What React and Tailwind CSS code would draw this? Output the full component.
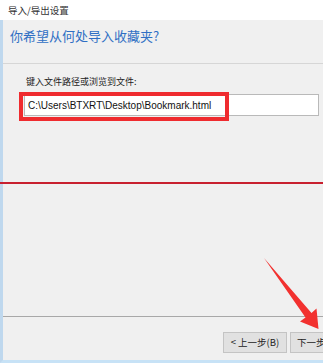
export default function App() {
    const font = { fontFamily: '"Microsoft YaHei", "Noto Sans CJK SC", "Liberation Sans", sans-serif' };
    return (
        <div className="relative w-[323px] h-[363px] overflow-hidden bg-[#f0f0f0] flex flex-col" style={font}>
            {/* Title bar */}
            <div className="h-[20px] shrink-0 bg-white flex items-center pl-[8px] text-[9.5px] text-[#333]">
                导入/导出设置
            </div>

            {/* Wizard body */}
            <div className="flex-1 flex flex-col border-l-[3px] border-b-[3px] border-l-[#bfd8ee] border-b-[#c7e2f6]">
                <div className="h-[44px] shrink-0 border-b border-[#d6d6d6] pl-[7px] pt-[6px] text-[13px] text-[#2f6fc4] leading-[20px]">
                    你希望从何处导入收藏夹?
                </div>

                <div className="pl-[23px] pt-[12px] text-[9px] leading-[12px] text-[#222]">键入文件路径或浏览到文件:</div>

                <div className="ml-[21px] mr-[4px] mt-[6px] h-[22px] bg-white border border-[#b9b9b9] flex items-center pl-[3px] text-[10px] text-[#111]" style={{ fontFamily: '"Liberation Sans", "Noto Sans", sans-serif' }}>
                    C:\Users\BTXRT\Desktop\Bookmark.html
                </div>

                <div className="flex-1"></div>

                <div className="h-[1px] bg-[#a8a8a8]"></div>

                <div className="h-[43px] flex items-start pt-[15px] gap-[3px] pl-[220px]">
                    <div className="shrink-0 w-[64px] h-[21px] bg-[#e1e1e1] border border-[#c4c4c4] flex items-center justify-center text-[9.5px] text-[#222]">
                        &lt; 上一步(B)
                    </div>
                    <div className="shrink-0 w-[64px] h-[21px] bg-[#e1e1e1] border border-[#c4c4c4] flex items-center pl-[6px] text-[9.5px] text-[#222] whitespace-nowrap">
                        下一步(N) &gt;
                    </div>
                </div>
            </div>

            {/* Annotations */}
            <div className="absolute left-[19px] top-[92px] w-[210px] h-[29px] border-[4.5px] border-[#ef2b2f]"></div>
            <div className="absolute left-0 right-0 top-[182px] h-[2px] bg-[#c8202f]"></div>
            <svg className="absolute left-0 top-0" width="323" height="363" viewBox="0 0 323 363">
                <polygon
                    points="264,258 311.5,313 316.5,308.5 318.5,329 300,321.5 305.5,317.5"
                    fill="#f2312f"
                />
            </svg>
        </div>
    );
}
